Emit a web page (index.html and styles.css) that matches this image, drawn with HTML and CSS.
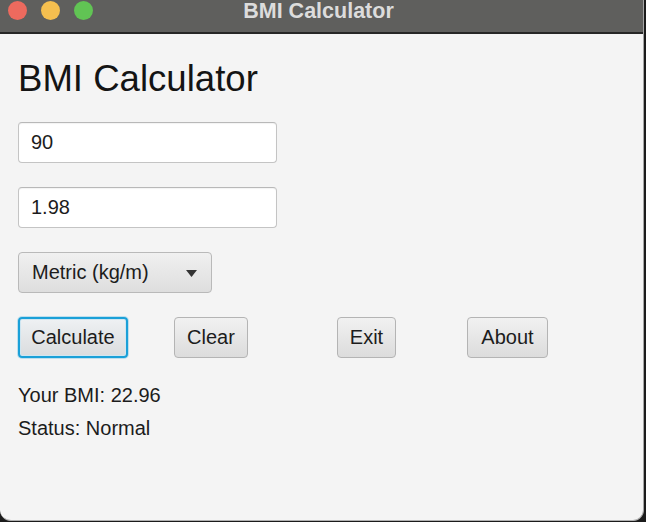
FILE: index.html
```html
<!DOCTYPE html>
<html lang="en">
<head>
<meta charset="utf-8">
<title>BMI Calculator</title>
<link rel="stylesheet" href="styles.css">
</head>
<body>
<div class="window">
  <div class="titlebar">
    <div class="lights">
      <span class="light red"></span>
      <span class="light yellow"></span>
      <span class="light green"></span>
    </div>
    <div class="title">BMI Calculator</div>
    <div class="spacer"></div>
  </div>
  <div class="content">
    <h1 class="heading">BMI Calculator</h1>
    <div class="field">90</div>
    <div class="field">1.98</div>
    <div class="combo">
      <span class="combo-text">Metric (kg/m)</span>
      <svg class="combo-arrow" width="11" height="7" viewBox="0 0 11 7"><path d="M0 0 L11 0 L5.5 7 Z" fill="#333"/></svg>
    </div>
    <div class="buttons">
      <div class="btn btn-calc focused">Calculate</div>
      <div class="btn btn-clear">Clear</div>
      <div class="btn btn-exit">Exit</div>
      <div class="btn btn-about">About</div>
    </div>
    <div class="results">
      <div class="result">Your BMI: 22.96</div>
      <div class="result">Status: Normal</div>
    </div>
  </div>
</div>
</body>
</html>
```

FILE: styles.css
```css
html, body {
  margin: 0;
  padding: 0;
  background: #1b1b1b;
  width: 646px;
  height: 522px;
  overflow: hidden;
}

.window {
  width: 643px;
  height: 520px;
  background: #f4f4f4;
  border-right: 1px solid #a5a5a5;
  border-bottom: 1px solid #b0b0b0;
  border-radius: 0 0 11px 11px;
  overflow: hidden;
  display: flex;
  flex-direction: column;
  font-family: "Liberation Sans", Arial, sans-serif;
  color: #1c1c1c;
}

.titlebar {
  height: 32px;
  flex: 0 0 32px;
  background: #5f5f5d;
  border-bottom: 2px solid #262626;
  display: grid;
  grid-template-columns: 1fr auto 1fr;
  align-items: start;
}

.lights {
  display: flex;
  gap: 14px;
  padding: 1px 0 0 8px;
}

.light {
  width: 19px;
  height: 19px;
  border-radius: 50%;
  display: block;
}
.red { background: #ed6a5e; }
.yellow { background: #f5bf4f; }
.green { background: #61c454; }

.title {
  font-weight: bold;
  font-size: 21.5px;
  line-height: 22px;
  color: #dcdcdc;
  padding-top: 0;
  margin-left: -6px;
}

.content {
  display: flex;
  flex-direction: column;
  align-items: flex-start;
  gap: 24px;
  padding: 26px 0 0 18px;
}

.heading {
  margin: 0;
  font-weight: normal;
  font-size: 36.6px;
  line-height: 38px;
  color: #141414;
}

.field {
  box-sizing: border-box;
  width: 259px;
  height: 41px;
  background: #fff;
  border: 1px solid #c4c4c4;
  border-top-color: #b8b8b8;
  border-radius: 4px;
  box-shadow: inset 0 1px 1px rgba(0,0,0,0.05);
  font-size: 20px;
  line-height: 38px;
  padding-left: 12px;
  color: #1c1c1c;
}

.combo {
  box-sizing: border-box;
  width: 194px;
  height: 41px;
  border: 1px solid #b9b9b9;
  border-radius: 4px;
  background: linear-gradient(#f0f0f0, #dedede);
  display: flex;
  align-items: center;
  justify-content: space-between;
  padding: 0 14px 0 13px;
  font-size: 20px;
}

.combo-arrow {
  display: block;
  margin-top: 1px;
}

.buttons {
  display: grid;
  grid-template-columns: 156px 163px 130px auto;
  align-items: center;
}

.btn {
  box-sizing: border-box;
  height: 41px;
  border: 1px solid #b4b4b4;
  border-radius: 4px;
  background: linear-gradient(#f1f1f1, #dcdcdc);
  font-size: 20px;
  line-height: 39px;
  text-align: center;
  color: #1c1c1c;
}

.btn-calc { width: 110px; }
.btn-clear { width: 74px; }
.btn-exit { width: 59px; }
.btn-about { width: 81px; }

.focused {
  border: 2px solid #1aa0d8;
  line-height: 37px;
  box-shadow: inset 0 0 0 1px #cfe6f1, 0 0 0 1px rgba(26,160,216,0.25);
  background: linear-gradient(#eef1f3, #dadcde);
}

.results {
  display: flex;
  flex-direction: column;
  gap: 6px;
  margin-top: 0;
}

.result {
  font-size: 20px;
  line-height: 27px;
  color: #1c1c1c;
}
```
